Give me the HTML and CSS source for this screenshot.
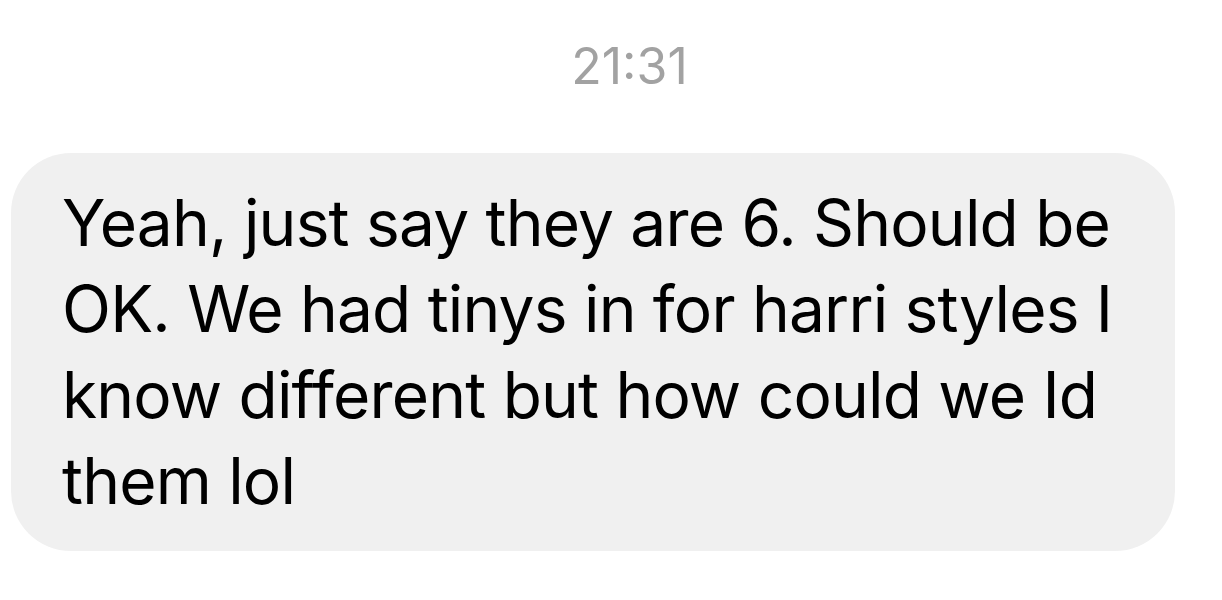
FILE: index.html
```html
<!DOCTYPE html>
<html lang="en">
<head>
<meta charset="utf-8">
<link rel="stylesheet" href="styles.css">
</head>
<body>
<div class="thread">
  <div class="timestamp">21:31</div>
  <div class="bubble">Yeah, just say they are 6. Should be OK. We had tinys in for harri styles I know different but how could we Id them lol</div>
</div>
</body>
</html>
```
FILE: styles.css
```css
html, body {
  margin: 0;
  padding: 0;
  background: #ffffff;
}
.thread {
  display: flex;
  flex-direction: column;
  align-items: flex-start;
  padding: 36px 0 0 11px;
  font-family: Inter, "Liberation Sans", sans-serif;
}
.timestamp {
  align-self: stretch;
  text-align: center;
  font-size: 50px;
  line-height: 60px;
  color: #a2a2a2;
  padding-left: 26px;
  margin-bottom: 57px;
}
.bubble {
  box-sizing: border-box;
  width: 1164px;
  background: #f0f0f0;
  border-radius: 60px;
  padding: 27px 30px 27px 51px;
  font-size: 64px;
  line-height: 86px;
  letter-spacing: -0.8px;
  color: #000000;
}
```
